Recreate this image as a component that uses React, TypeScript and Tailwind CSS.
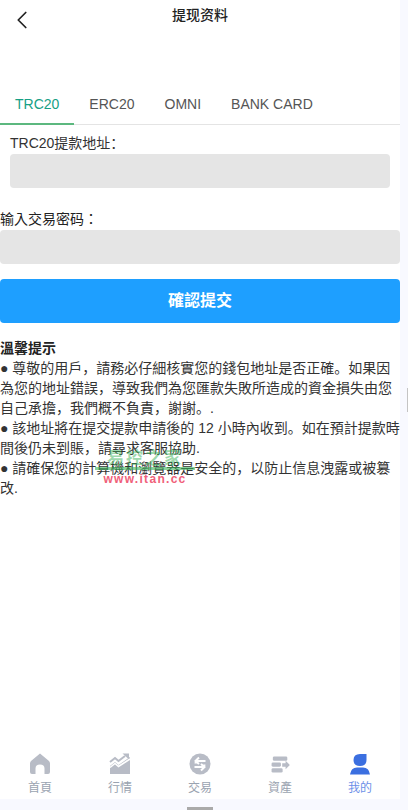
import { ChevronLeft } from "lucide-react";
import type { ReactNode } from "react";

const FONT = "font-['Liberation_Sans','Noto_Sans_CJK_SC',sans-serif]";

const tabs = ["TRC20", "ERC20", "OMNI", "BANK CARD"];

const HomeIcon = () => (
  <svg width="22" height="22" viewBox="0 0 22 22" fill="#b8bcc6">
    <path d="M11 0.5 L20 8 Q21 9 21 10.5 V19 Q21 21 19 21 H15.5 V15.5 Q15.5 11.5 11 11.5 Q6.5 11.5 6.5 15.5 V21 H3 Q1 21 1 19 V10.5 Q1 9 2 8 Z" />
  </svg>
);

const ChartIcon = () => (
  <svg width="22" height="22" viewBox="0 0 22 22" fill="#b8bcc6">
    <path d="M1 21 V13 L6 9 L9.5 12 L21 4 V21 Z" />
    <path d="M1 9 L6 5 L9.5 8 L16 3" fill="none" stroke="#b8bcc6" strokeWidth="2" />
    <path d="M13.5 0.5 H20 V6.5 Z" />
    <path d="M1 14.5 L6 10.5 L9.5 13.5 L21 6" fill="none" stroke="#fff" strokeWidth="1.6" />
  </svg>
);

const SwapIcon = () => (
  <svg width="22" height="22" viewBox="0 0 22 22">
    <circle cx="11" cy="11" r="10.5" fill="#b8bcc6" />
    <path d="M16.5 8 H9 Q6.5 8 6.5 10.5 M10 4.5 L6.5 8 L10 11" fill="none" stroke="#fff" strokeWidth="2" />
    <path d="M5.5 14 H13 Q15.5 14 15.5 11.5 M12 17.5 L15.5 14 L12 11" fill="none" stroke="#fff" strokeWidth="2" />
  </svg>
);

const AssetIcon = () => (
  <svg width="21" height="17" viewBox="0 0 22 20" fill="#b8bcc6">
    <rect x="2" y="0.5" width="17" height="5" rx="1.5" />
    <rect x="0.5" y="7.5" width="11" height="5" rx="1.5" />
    <rect x="0.5" y="14.5" width="13" height="5" rx="1.5" />
    <path d="M13 8.5 H17 V5.5 L22 10.5 L17 15.5 V12.5 H13 Z" />
  </svg>
);

const UserIcon = () => (
  <svg width="22" height="22" viewBox="0 0 22 22" fill="#3b6fe0">
    <path d="M11 1 H17.5 V7 Q17.5 13 11 13 Q4.5 13 4.5 7 Q4.5 1 11 1 Z" />
    <path d="M1 21.5 Q2 14.5 8 14.5 H14 Q20 14.5 21 21.5 Z" />
  </svg>
);

const navItems: { label: string; icon: ReactNode; active?: boolean }[] = [
  { label: "首頁", icon: <HomeIcon /> },
  { label: "行情", icon: <ChartIcon /> },
  { label: "交易", icon: <SwapIcon /> },
  { label: "資產", icon: <AssetIcon /> },
  { label: "我的", icon: <UserIcon />, active: true },
];

export default function App() {
  return (
    <div className={`relative flex h-[810px] w-full overflow-hidden bg-[#f8f9ff] text-[14px] text-[#333] ${FONT}`}>
      <div className="flex h-full w-[400px] flex-col">
        <div className="flex h-[799px] flex-col bg-white">
          {/* Titre */}
          <div className="relative h-[92px] shrink-0">
            <ChevronLeft className="absolute left-[7px] top-[5px] text-[#222]" size={30} strokeWidth={1.4} />
            <h1 className="pt-[5px] text-center text-[14px] font-medium leading-5 text-[#222]">提现资料</h1>
          </div>

          {/* Onglets */}
          <div className="flex h-[33px] shrink-0 border-b border-[#e4e4e4]">
            {tabs.map((t, i) => (
              <div
                key={t}
                className={
                  i === 0
                    ? "h-[33px] border-b-2 border-[#5cb87f] px-[15px] leading-6 text-[#16a085]"
                    : "h-[32px] px-[15px] leading-6 text-[#555]"
                }
              >
                {t}
              </div>
            ))}
          </div>

          <div className="px-[10px]">
            <div className="pt-[8px] leading-5 text-[#333]">TRC20提款地址：</div>
            <div className="mt-[1px] h-[34px] rounded-sm bg-[#e5e5e5]" />
          </div>

          <div className="mt-[21px] font-['Liberation_Sans','Noto_Sans_CJK_TC',sans-serif] leading-5 text-[#222]">输入交易密码：</div>
          <div className="mt-[1px] h-[34px] rounded-sm bg-[#e5e5e5]" />

          <button className="mt-[15px] h-[44px] w-full rounded-sm bg-[#1e9fff] text-[16px] font-bold text-white">
            確認提交
          </button>

          <div className="relative mt-[15px] leading-5 text-[#333]">
            <div className="font-bold text-[#222]">溫馨提示</div>
            <p>● 尊敬的用戶，請務必仔細核實您的錢包地址是否正確。如果因為您的地址錯誤，導致我們為您匯款失敗所造成的資金損失由您自己承擔，我們概不負責，謝謝。.</p>
            <p>● 該地址將在提交提款申請後的 12 小時內收到。如在預計提款時間後仍未到賬，請尋求客服協助.</p>
            <p>● 請確保您的計算機和瀏覽器是安全的，以防止信息洩露或被篡改.</p>
            {/* Filigrane */}
            <div className="absolute left-[95px] top-[112px] w-[100px] text-center">
              <div className="text-[17px] font-bold leading-[17px] tracking-[2px] text-[#3cb45c]/50">易控之家</div>
              <div className="h-[3px] w-[100px] bg-[#3cb45c]/60" />
              <div className="mt-[3px] text-[12px] font-bold leading-[12px] tracking-[1.3px] text-[#f0607a]">www.itan.cc</div>
            </div>
          </div>

          {/* Navigation */}
          <nav className="mt-auto flex h-[48px] shrink-0">
            {navItems.map((item) => (
              <div key={item.label} className="flex flex-1 flex-col items-center">
                <div className="flex h-[26px] items-center">{item.icon}</div>
                <span className={`mt-[3px] text-[12px] leading-4 ${item.active ? "text-[#6d8fe8]" : "text-[#9aa3b0]"}`}>
                  {item.label}
                </span>
              </div>
            ))}
          </nav>
        </div>
        <div className="flex flex-1 items-end justify-center">
          <div className="h-[3px] w-[26px] bg-[#aaa]" />
        </div>
      </div>
      <div className="absolute right-0 top-[388px] h-[24px] w-[1px] bg-[#c4c4c4]" />
    </div>
  );
}
